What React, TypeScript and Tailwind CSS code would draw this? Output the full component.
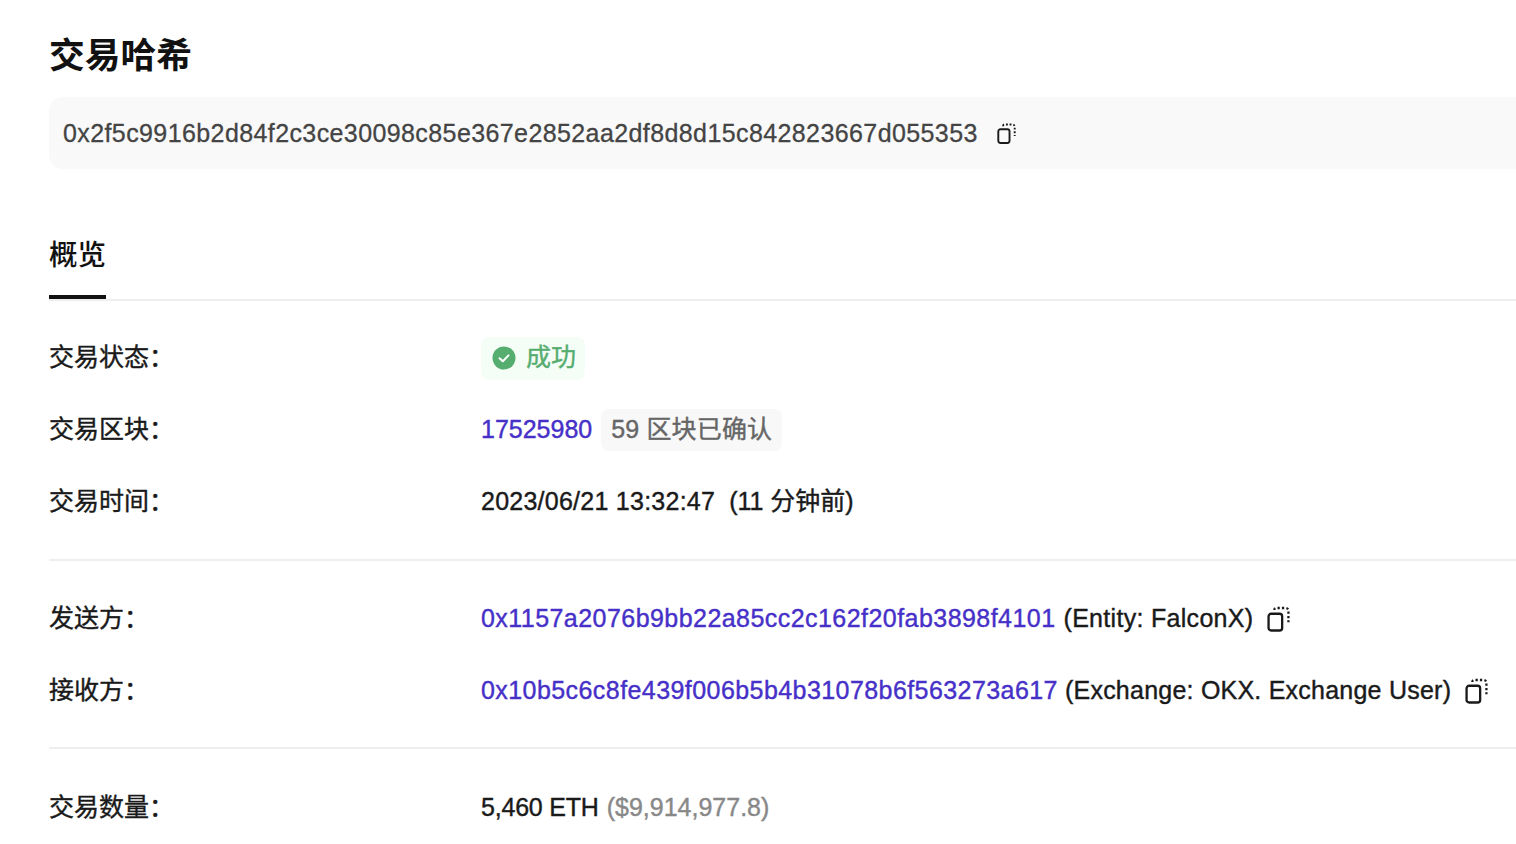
import React from 'react';

const FONT = 'font-["Liberation_Sans","Noto_Sans_CJK_SC",sans-serif]';

const CopyIcon: React.FC<{ className?: string }> = ({ className }) => (
  <svg viewBox="0 0 22 24" fill="none" stroke="#1a1a1a" className={className}>
    <rect x="1.5" y="7" width="13" height="16" rx="2.5" strokeWidth="2.2" />
    <path d="M7 3.5 Q7 1.5 9 1.5 H17.5 Q20.5 1.5 20.5 4.5 V15" strokeWidth="2.2" strokeDasharray="2.2 2" />
  </svg>
);

const Row: React.FC<{ label: string; children: React.ReactNode }> = ({ label, children }) => (
  <div className="flex items-center h-[72px]">
    <div className="w-[432px] shrink-0 text-[25px] [-webkit-text-stroke:0.4px] text-[#1a1a1a]">{label}</div>
    <div className="flex items-center text-[25px] [-webkit-text-stroke:0.4px] text-[#1a1a1a] whitespace-nowrap">{children}</div>
  </div>
);

const Link: React.FC<{ className?: string; children: React.ReactNode }> = ({ className, children }) => (
  <span className={`text-[#4630c8] ${className ?? ''}`}>{children}</span>
);

export default function App() {
  return (
    <div className={`w-[1516px] h-[844px] overflow-hidden bg-white pl-[49px] ${FONT}`}>
      <h1 className="pt-[32px] h-[97px] text-[35.75px] leading-[48px] font-bold text-[#111]">交易哈希</h1>

      <div className="flex items-center h-[72px] pl-[14px] pt-[1px] bg-[#f9f9f9] rounded-l-[14px] text-[25px] text-[#444] [-webkit-text-stroke:0.3px]">
        <span className="tracking-[0.4px]">0x2f5c9916b2d84f2c3ce30098c85e367e2852aa2df8d8d15c842823667d055353</span>
        <CopyIcon className="ml-[19px] w-[19px] h-[21px]" />
      </div>

      <div className="mt-[62px] h-[70px] border-b-2 border-[#eeeeee]">
        <div className="inline-block w-[57px] h-[68px] pt-[1px] border-b-4 border-[#111] text-[28.5px] leading-[46px] font-medium text-[#111] whitespace-nowrap">概览</div>
      </div>

      <div className="mt-[21px] h-[239px] border-b-2 border-[#eeeeee]">
        <Row label="交易状态：">
          <div className="flex items-center gap-[10px] h-[43px] pl-[11px] pr-[9px] bg-[#f5fdf7] rounded-[8px] text-[#55ad6f]">
            <svg viewBox="0 0 24 24" className="w-[24px] h-[24px] -mt-[1px]">
              <circle cx="12" cy="12" r="11.5" fill="#55ad6f" />
              <path d="M7.5 12.2 L10.8 15.2 L16.5 9.4" fill="none" stroke="#fff" strokeWidth="2" strokeLinecap="round" strokeLinejoin="round" />
            </svg>
            <span>成功</span>
          </div>
        </Row>
        <Row label="交易区块：">
          <Link>17525980</Link>
          <span className="ml-[9px] flex items-center h-[42px] px-[10px] bg-[#f8f8f8] rounded-[8px] text-[#666] tracking-[0.15px]">59 区块已确认</span>
        </Row>
        <Row label="交易时间：">
          <span className="tracking-[0.25px]">2023/06/21 13:32:47</span>
          <span className="ml-[14px]">(11 分钟前)</span>
        </Row>
      </div>

      <div className="mt-[22px] h-[166px] border-b-2 border-[#eeeeee]">
        <Row label="发送方：">
          <Link className="tracking-[0.45px]">0x1157a2076b9bb22a85cc2c162f20fab3898f4101</Link>
          <span className="ml-[8px] tracking-[0.3px]">(Entity: FalconX)</span>
          <CopyIcon className="ml-[14px] w-[23px] h-[26px]" />
        </Row>
        <Row label="接收方：">
          <Link className="tracking-[0.43px]">0x10b5c6c8fe439f006b5b4b31078b6f563273a617</Link>
          <span className="ml-[7px] tracking-[0.23px]">(Exchange: OKX. Exchange User)</span>
          <CopyIcon className="ml-[14px] w-[23px] h-[26px]" />
        </Row>
      </div>

      <div className="mt-[23px]">
        <Row label="交易数量：">
          <span className="tracking-[-0.2px]">5,460 ETH</span>
          <span className="ml-[8px] text-[#888]">($9,914,977.8)</span>
        </Row>
      </div>
    </div>
  );
}
